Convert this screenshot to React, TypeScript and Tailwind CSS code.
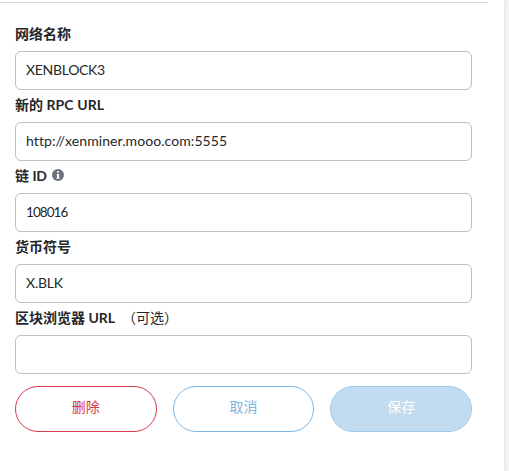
import type { ReactNode } from "react";

type FieldProps = {
  label: ReactNode;
  name: string;
  value: string;
  tracking?: string;
};

function Field({ label, name, value, tracking = "" }: FieldProps) {
  return (
    <div>
      <div className="flex h-8 items-center pb-0.5 text-[14px] leading-5 font-bold whitespace-pre text-[#24272a]">
        {label}
      </div>
      <input
        aria-label={name}
        defaultValue={value}
        className={`block h-[39px] w-full rounded-[6px] border border-[#bbc0c5] bg-white px-2.5 pb-0.5 text-[#24272a] outline-none ${tracking}`}
      />
    </div>
  );
}

function InfoIcon() {
  return (
    <svg viewBox="0 0 12 12" className="mb-0.5 ml-[6px] size-3">
      <circle cx="6" cy="6" r="6" fill="#6a737d" />
      <path d="M5 2.2h2v1.6H5zM4.6 5H7v3.7h.7v1H4.4v-1H5V6h-.4z" fill="#fff" />
    </svg>
  );
}

const button =
  "h-[46px] flex-1 rounded-full border pb-[5px] text-[14px] leading-5";

export default function App() {
  return (
    <div className="h-[471px] w-[509px] overflow-hidden bg-[#f2f3f4] font-['Lato','Noto_Sans_CJK_SC',sans-serif]">
      <div className="h-full w-[504px] bg-white pt-0.5 shadow-[0_0_3px_rgba(0,0,0,0.12)]">
        <div className="h-px w-[488px] bg-[#d6d9dc]" />
        <form className="w-[472px] pt-4 pl-[15px]">
          <Field label="网络名称" name="网络名称" value="XENBLOCK3" tracking="text-[14px] tracking-[-0.3px]" />
          <Field
            label={<>新的 <span className="tracking-[0.1px]">RPC URL</span></>}
            name="新的 RPC URL"
            value="http://xenminer.mooo.com:5555"
            tracking="text-[14px] tracking-[0.08px]"
          />
          <Field
            label={<>链 <span className="tracking-[-0.4px]">ID</span><InfoIcon /></>}
            name="链 ID"
            value="108016"
            tracking="text-[13.5px] tracking-[-0.95px]"
          />
          <Field label="货币符号" name="货币符号" value="X.BLK" tracking="text-[14px] tracking-[-0.2px]" />
          <Field
            label={
              <>
                区块浏览器 <span>URL</span>
                <span className="ml-[7px] font-normal">（可选）</span>
              </>
            }
            name="区块浏览器 URL"
            value=""
            tracking="text-[14px]"
          />
          <div className="flex gap-4 pt-3">
            <button type="button" className={`${button} border-[#d73a49] text-[#d73a49]`}>删除</button>
            <button type="button" className={`${button} border-[#7cb6e2] text-[#7cb6e2]`}>取消</button>
            <button type="button" className={`${button} border-[#a0cbea] bg-[#c1dcf1] text-white`}>保存</button>
          </div>
        </form>
      </div>
    </div>
  );
}
